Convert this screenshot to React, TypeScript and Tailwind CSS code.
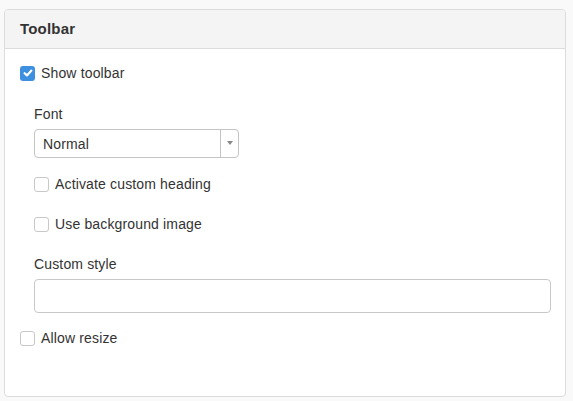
import React from 'react';

const Check: React.FC<{ checked?: boolean; label: string }> = ({ checked, label }) => (
  <label className="flex items-center h-5 gap-[6px] text-[14px] text-[#333] tracking-[0.15px]">
    {checked ? (
      <span className="w-[15px] h-[15px] rounded-[3px] bg-[#3d8fdf] flex items-center justify-center">
        <svg width="10" height="10" viewBox="0 0 10 10">
          <path d="M1.6 5.2 L4 7.4 L8.4 2.6" fill="none" stroke="#fff" strokeWidth="2.2" strokeLinecap="round" strokeLinejoin="round" />
        </svg>
      </span>
    ) : (
      <span className="w-[15px] h-[15px] rounded-[3px] border border-[#c8c8c8] bg-white" />
    )}
    <span className="pt-[1px]">{label}</span>
  </label>
);

const App: React.FC = () => {
  return (
    <div className="min-h-screen bg-[#f9f9f9] pt-[9px] pl-[4px] pr-[7px] pb-[4px] font-['Liberation_Sans',Arial,sans-serif]">
      <div className="h-[388px] bg-white border border-[#dcdcdc] rounded-[4px] overflow-hidden flex flex-col">
        {/* Header */}
        <div className="h-[39px] bg-[#f4f4f4] border-b border-[#dcdcdc] flex items-center px-[15px]">
          <h3 className="text-[15px] font-bold text-[#333] tracking-[0.2px] pt-[1px]">Toolbar</h3>
        </div>

        {/* Body */}
        <div className="pt-[14px] px-[15px] flex flex-col">
          <Check checked label="Show toolbar" />

          <div className="pl-[14px] flex flex-col">
            <div className="mt-[21px] h-5 flex items-center text-[14px] text-[#333] tracking-[0.15px]">Font</div>
            <div className="mt-[5px] w-[205px] h-[29px] border border-[#c4c4c4] rounded-[4px] flex items-center text-[14px] text-[#333] tracking-[0.15px]">
              <span className="flex-1 pl-[8px] pt-[2px]">Normal</span>
              <span className="w-[18px] h-full border-l border-[#c4c4c4] flex items-center justify-center">
                <svg width="6" height="5" viewBox="0 0 6 5">
                  <path d="M0 0 H6 L3 4 Z" fill="#888" />
                </svg>
              </span>
            </div>

            <div className="mt-[16px]">
              <Check label="Activate custom heading" />
            </div>
            <div className="mt-[20px]">
              <Check label="Use background image" />
            </div>

            <div className="mt-[20px] h-5 flex items-center text-[14px] text-[#333] tracking-[0.15px]">Custom style</div>
            <div className="mt-[5px] w-[517px] h-[34px] border border-[#c8c8c8] rounded-[4px] bg-white" />
          </div>

          <div className="mt-[15px]">
            <Check label="Allow resize" />
          </div>
        </div>
      </div>
    </div>
  );
};

export default App;
